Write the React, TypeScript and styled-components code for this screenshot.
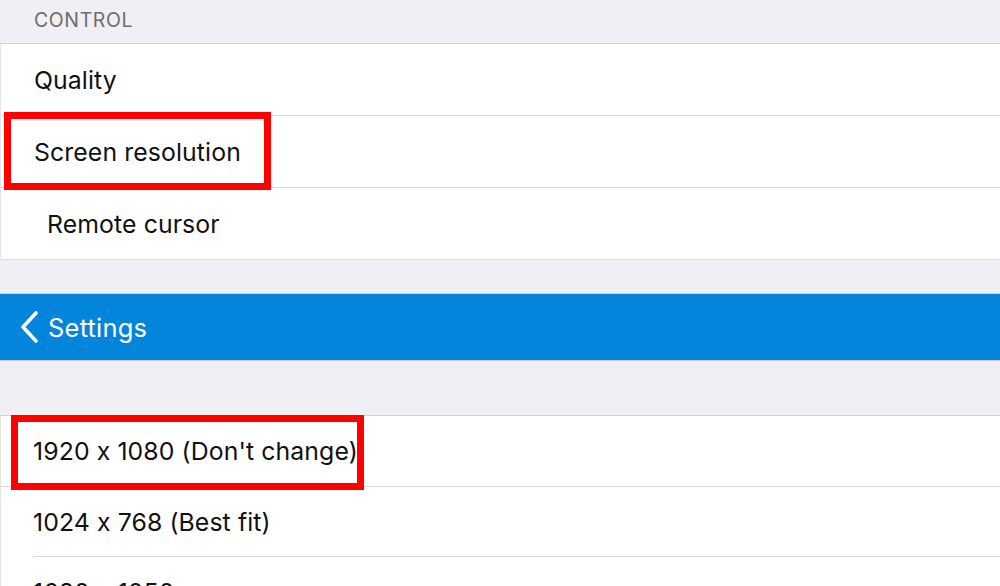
import React from 'react';
import styled, { createGlobalStyle } from 'styled-components';

const GlobalStyle = createGlobalStyle`
  html, body {
    margin: 0;
    padding: 0;
    background: #efeff4;
    font-family: Inter, 'Noto Sans', 'Liberation Sans', sans-serif;
    -webkit-font-smoothing: antialiased;
  }
`;

const controlRows = [
  { label: 'Quality', indent: 34 },
  { label: 'Screen resolution', indent: 34, marked: true },
  { label: 'Remote cursor', indent: 47 },
];

const resolutions = [
  { label: '1920 x 1080 (Don\'t change)', marked: true },
  { label: '1024 x 768 (Best fit)' },
  { label: '1680 x 1050' },
];

export default function App() {
  return (
    <>
      <GlobalStyle />
      <StyledPage>
        <StyledSectionHeader>CONTROL</StyledSectionHeader>
        <StyledGroup>
          {controlRows.map((row) => (
            <StyledRow key={row.label} $indent={row.indent}>
              <StyledLabel>{row.label}</StyledLabel>
              {row.marked && <StyledMark $left={3} $top={-4} $width={267} $height={78} />}
            </StyledRow>
          ))}
        </StyledGroup>

        <StyledSpacer $height={33} />

        <StyledNavBar>
          <svg width="22" height="34" viewBox="0 0 22 34" fill="none">
            <path
              d="M17 3 L4 17 L17 31"
              stroke="#fff"
              strokeWidth="3.6"
              strokeLinecap="round"
              strokeLinejoin="round"
            />
          </svg>
          <StyledNavTitle>Settings</StyledNavTitle>
        </StyledNavBar>

        <StyledSpacer $height={54} />

        <StyledGroup>
          {resolutions.map((row) => (
            <StyledInsetRow key={row.label}>
              <StyledLabel>{row.label}</StyledLabel>
              {row.marked && <StyledMark $left={10} $top={-1} $width={353} $height={75} />}
            </StyledInsetRow>
          ))}
        </StyledGroup>
      </StyledPage>
    </>
  );
}

const StyledPage = styled.div`
  width: 1000px;
  height: 586px;
  overflow: hidden;
  background: #efeff4;
`;

const StyledSectionHeader = styled.div`
  height: 44px;
  padding-left: 34px;
  display: flex;
  align-items: center;
  padding-bottom: 4px;
  box-sizing: border-box;
  font-size: 19.5px;
  letter-spacing: 0.6px;
  color: #6d6d72;
  border-bottom: 1px solid #d6d6da;
`;

const StyledGroup = styled.div`
  background: #fff;
  border-left: 1px solid #e4e4e6;
`;

const StyledRow = styled.div<{ $indent: number }>`
  position: relative;
  height: 72px;
  box-sizing: border-box;
  padding-left: ${(p) => p.$indent - 1}px;
  display: flex;
  align-items: center;
  border-bottom: 1px solid #dcdcdc;
`;

const StyledInsetRow = styled.div`
  position: relative;
  height: 70px;
  margin-left: 32px;
  box-sizing: border-box;
  display: flex;
  align-items: center;
  border-bottom: 1px solid #d9d9d9;
  &:first-child {
    height: 71px;
    margin-left: 0;
    padding-left: 32px;
  }
`;

const StyledLabel = styled.span`
  font-size: 24.8px;
  color: #111;
  letter-spacing: 0.1px;
`;

const StyledMark = styled.div<{ $left: number; $top: number; $width: number; $height: number }>`
  position: absolute;
  left: ${(p) => p.$left}px;
  top: ${(p) => p.$top}px;
  width: ${(p) => p.$width}px;
  height: ${(p) => p.$height}px;
  box-sizing: border-box;
  border: 7px solid #fe0000;
  pointer-events: none;
`;

const StyledSpacer = styled.div<{ $height: number }>`
  height: ${(p) => p.$height}px;
  border-bottom: 1px solid #d3d3d6;
`;

const StyledNavBar = styled.div`
  height: 66px;
  background: #0285da;
  border-bottom: 1px solid #c9ccd2;
  display: flex;
  align-items: center;
  padding-left: 19px;
  gap: 7px;
  color: #fff;
`;

const StyledNavTitle = styled.span`
  font-size: 25.5px;
  color: #fff;
  letter-spacing: 0.2px;
`;
